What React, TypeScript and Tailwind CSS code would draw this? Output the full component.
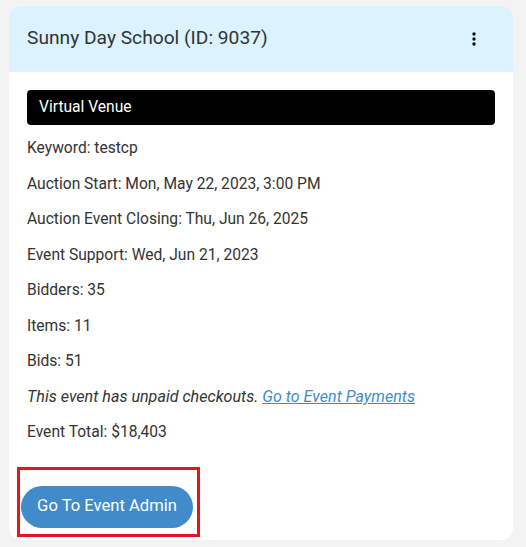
import React from "react";

export default function App() {
  const rows = [
    "Keyword: testcp",
    "Auction Start: Mon, May 22, 2023, 3:00 PM",
    "Auction Event Closing: Thu, Jun 26, 2025",
    "Event Support: Wed, Jun 21, 2023",
    "Bidders: 35",
    "Items: 11",
    "Bids: 51",
  ];
  return (
    <div
      className="w-[526px] h-[547px] bg-[#f3f3f3] pt-[6px] pl-[9px]"
      style={{ fontFamily: "Roboto, 'Liberation Sans', sans-serif" }}
    >
      <div className="w-[504px] h-[534px] bg-white rounded-[12px] overflow-hidden flex flex-col">
        <div className="h-[66px] bg-[#dbf3fe] flex items-center justify-between pl-[18px] pr-[37px]">
          <span className="text-[19.2px] text-[#333333] -mt-[2px]">Sunny Day School (ID: 9037)</span>
          <svg width="4" height="14" viewBox="0 0 4 14">
            <circle cx="2" cy="2" r="1.7" fill="#111" />
            <circle cx="2" cy="7" r="1.7" fill="#111" />
            <circle cx="2" cy="12" r="1.7" fill="#111" />
          </svg>
        </div>
        <div className="px-[18px] pt-[18px] flex flex-col">
          <div className="h-[35px] bg-black rounded-[4px] flex items-center pl-[12px] text-white text-[15.6px]">
            Virtual Venue
          </div>
          <div className="flex flex-col mt-[6px] text-[15.6px] text-[#333333]">
            {rows.map((r) => (
              <div key={r} className="h-[35.5px] flex items-center">
                {r}
              </div>
            ))}
            <div className="h-[35.5px] flex items-center italic text-[16.1px]">
              This event has unpaid checkouts.&nbsp;
              <a href="#" className="text-[#428bca] underline">Go to Event Payments</a>
            </div>
            <div className="h-[35.5px] flex items-center">Event Total: $18,403</div>
          </div>
        </div>
        <div className="mt-[16px] ml-[8px] w-[183px] h-[70px] border-[3px] border-[#e8141c] pt-[16px] pl-[1px]">
          <button className="w-[172px] h-[42px] rounded-full bg-[#428bca] text-white text-[16.6px] flex items-center justify-center">
            Go To Event Admin
          </button>
        </div>
      </div>
    </div>
  );
}
